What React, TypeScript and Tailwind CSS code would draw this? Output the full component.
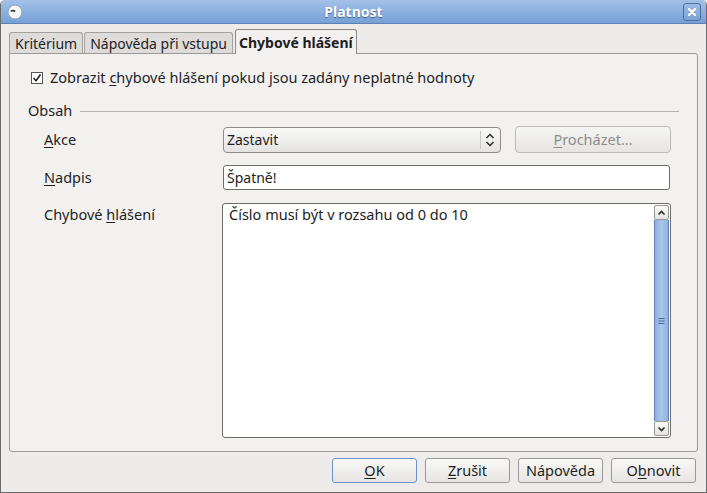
import React from "react";

const font = { fontFamily: '"Noto Sans", "DejaVu Sans", sans-serif' };

function U({ children }: { children: React.ReactNode }) {
  return <span className="underline underline-offset-2">{children}</span>;
}

function Btn({ children, def }: { children: React.ReactNode; def?: boolean }) {
  return (
    <div
      className={`w-[85px] h-[25px] flex items-center justify-center rounded-[3px] border text-[14.5px] text-[#1e1e1e] bg-gradient-to-b from-[#f8f8f7] to-[#e6e5e3] ${
        def ? "border-[#6f93c3]" : "border-[#9a9895]"
      }`}
    >
      {children}
    </div>
  );
}

function Arrow({ up }: { up?: boolean }) {
  return (
    <div className="h-[15px] w-[15px] rounded-[2px] border border-[#9a9895] bg-gradient-to-b from-[#fafafa] to-[#e4e3e1] flex items-center justify-center">
      <svg width="9" height="6" viewBox="0 0 9 6">
        <path
          d={up ? "M1.5 4.5 L4.5 1.5 L7.5 4.5" : "M1.5 1.5 L4.5 4.5 L7.5 1.5"}
          stroke="#2b2b2b"
          strokeWidth="1.6"
          fill="none"
        />
      </svg>
    </div>
  );
}

export default function App() {
  return (
    <div style={font} className="w-[707px] h-[493px] flex flex-col bg-[#edecea] border-x border-b border-[#6a6a6a] overflow-hidden rounded-t-[5px]">
      {/* Title bar */}
      <div className="h-[24px] shrink-0 flex items-center justify-between px-[6px] bg-gradient-to-b from-[#a3c1e8] to-[#76a0d6] border-b border-[#5d80b6] relative">
        <svg width="16" height="16" viewBox="0 0 16 16">
          <circle cx="8" cy="8" r="7" fill="#f7f7f7" stroke="#8c9fb8" strokeWidth="1" />
          <path d="M3.5 6.5 Q6 5 8.5 6.5 L8 8 Q6 7.2 3.8 7.8 Z" fill="#333" />
        </svg>
        <div
          className="absolute left-0 right-0 text-center text-[14px] font-bold text-white pointer-events-none"
          style={{ textShadow: "0 1px 1px #3d5f92" }}
        >
          Platnost
        </div>
        <div className="w-[18px] h-[18px] rounded-[3px] border border-[#4e6f9f] bg-gradient-to-b from-[#9dbbe3] to-[#7aa2d8] flex items-center justify-center mr-[-1px]">
          <svg width="10" height="10" viewBox="0 0 10 10">
            <path d="M2 2 L8 8 M8 2 L2 8" stroke="#fff" strokeWidth="2.2" strokeLinecap="round" />
          </svg>
        </div>
      </div>

      {/* Body */}
      <div className="flex-1 flex flex-col px-[8px] pt-[5px]">
        {/* Tabs */}
        <div className="flex items-end h-[24px] text-[14px] text-[#1e1e1e] relative z-10">
          <div className="h-[21px] px-[5px] flex items-center border border-b-0 border-[#a3a19e] rounded-t-[3px] bg-[#dedcda]">
            Kritérium
          </div>
          <div className="h-[21px] ml-[1px] px-[5px] flex items-center border border-b-0 border-[#a3a19e] rounded-t-[3px] bg-[#dedcda]">
            Nápověda při vstupu
          </div>
          <div className="h-[25px] ml-[2px] px-[3px] flex items-center border border-b-0 border-[#8d8b88] rounded-t-[3px] bg-[#f2f1f0] font-bold -mb-[1px]">
            Chybové hlášení
          </div>
        </div>

        {/* Panel */}
        <div className="h-[399px] border border-[#9c9a97] rounded-b-[3px] rounded-tr-[3px] bg-[#f2f1f0] flex flex-col text-[14.5px] text-[#1e1e1e]">
          <div className="h-[23px] mt-[12px] flex items-center pl-[21px]">
            <div className="w-[12px] h-[12px] border border-[#555] bg-white flex items-center justify-center">
              <svg width="10" height="10" viewBox="0 0 10 10">
                <path d="M1.5 5 L4 7.8 L8.5 1.5" stroke="#222" strokeWidth="1.6" fill="none" />
              </svg>
            </div>
            <span className="ml-[7px]">
              Zobrazit <U>c</U>hybové hlášení pokud jsou zadány neplatné hodnoty
            </span>
          </div>

          <div className="h-[20px] mt-[12px] flex items-center pl-[18px] pr-[18px]">
            <span>Obsah</span>
            <div className="flex-1 h-px bg-[#b5b3b0] ml-[8px]" />
          </div>

          {/* Akce */}
          <div className="mt-[5px] flex items-center h-[27px]">
            <div className="w-[213px] pl-[34px]">
              <U>A</U>kce
            </div>
            <div className="w-[278px] h-[26px] rounded-[4px] border border-[#8e8c89] bg-gradient-to-b from-[#f9f9f8] to-[#e4e3e1] flex items-center pl-[3px] pr-[3px] text-[14px]">
              <span className="flex-1">Zastavit</span>
              <div className="w-px h-[18px] bg-[#c9c7c4]" />
              <svg width="14" height="16" viewBox="0 0 14 16" className="ml-[2px]">
                <path d="M3.5 6 L7 2.5 L10.5 6 M3.5 10 L7 13.5 L10.5 10" stroke="#2b2b2b" strokeWidth="1.5" fill="none" />
              </svg>
            </div>
            <div className="ml-[14px] w-[156px] h-[27px] rounded-[4px] border border-[#bdbbb8] bg-gradient-to-b from-[#f5f5f4] to-[#e6e5e3] flex items-center justify-center text-[#8f8d8a]">
              <span>
                <U>P</U>rocházet...
              </span>
            </div>
          </div>

          {/* Nadpis */}
          <div className="mt-[12px] flex items-center h-[25px]">
            <div className="w-[213px] pl-[34px]">
              <U>N</U>adpis
            </div>
            <div className="w-[447px] h-[25px] rounded-[3px] border border-[#6f6d6a] bg-white flex items-center pl-[3px] text-[14px]">
              Špatně!
            </div>
          </div>

          {/* Chybové hlášení */}
          <div className="mt-[13px] flex items-start">
            <div className="w-[212px] pl-[34px] mt-[1px]">
              Chybové <U>h</U>lášení
            </div>
            <div className="w-[449px] h-[235px] rounded-[3px] border border-[#6f6d6a] bg-white flex">
              <div className="flex-1 pl-[6px] pt-[0px]">Číslo musí být v rozsahu od 0 do 10</div>
              <div className="w-[15px] flex flex-col mr-[1px] my-[1px]">
                <Arrow up />
                <div className="flex-1 border-x border-[#5f83b8] bg-gradient-to-r from-[#8eb1e0] via-[#a9c5ea] to-[#8eb1e0] flex items-center justify-center">
                  <svg width="7" height="8" viewBox="0 0 7 8">
                    <path d="M0.5 1.5 H6.5 M0.5 4 H6.5 M0.5 6.5 H6.5" stroke="#4a6b9c" strokeWidth="1" />
                  </svg>
                </div>
                <Arrow />
              </div>
            </div>
          </div>
        </div>

        {/* Buttons */}
        <div className="flex justify-end gap-[8px] mt-[6px] pr-[2px]">
          <Btn def>
            <U>O</U>K
          </Btn>
          <Btn>
            <U>Z</U>rušit
          </Btn>
          <Btn>Nápověda</Btn>
          <Btn>
            O<U>b</U>novit
          </Btn>
        </div>
      </div>
    </div>
  );
}
